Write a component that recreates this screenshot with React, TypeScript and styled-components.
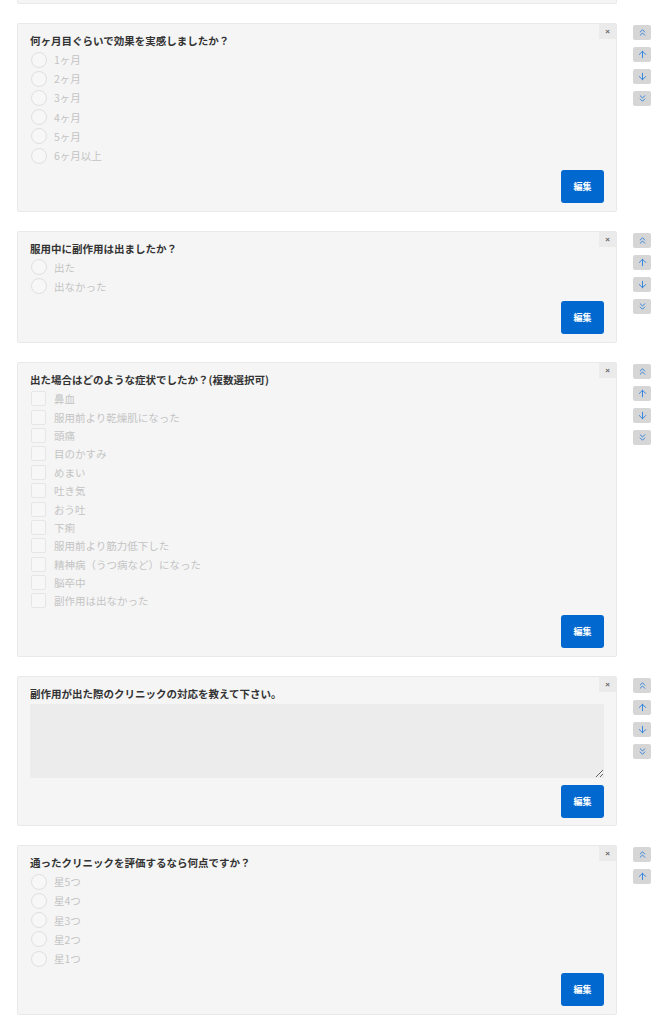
import styled, { createGlobalStyle } from "styled-components";
import { ChevronsUp, ChevronsDown, ArrowUp, ArrowDown } from "lucide-react";

const GlobalStyle = createGlobalStyle`
  body {
    margin: 0;
    background: #ffffff;
    font-family: "Noto Sans CJK JP", "Noto Sans", "Liberation Sans", sans-serif;
  }
`

const Page = styled.div`
  display: flex;
  flex-direction: column;
  gap: 19px;
  padding-left: 17px;
  padding-bottom: 20px;
`

const Row = styled.div`
  display: flex;
  align-items: flex-start;
  gap: 16px;
`

const PrevTail = styled.div`
  width: 600px;
  height: 4px;
  box-sizing: border-box;
  background: #f5f5f5;
  border: 1px solid #e9e9e9;
  border-top: none;
  border-radius: 0 0 2px 2px;
`

const Card = styled.div`
  position: relative;
  width: 600px;
  box-sizing: border-box;
  background: #f5f5f5;
  border: 1px solid #e9e9e9;
  border-radius: 2px;
  padding: 10px 12px 7.5px 12px;
  display: flex;
  flex-direction: column;
`

const CloseButton = styled.button`
  position: absolute;
  top: 0;
  right: 0;
  width: 17px;
  height: 15px;
  border: none;
  padding: 0;
  background: #ebebeb;
  color: #666;
  font-size: 8px;
  line-height: 15px;
  font-family: "Liberation Sans", sans-serif;
  font-weight: bold;
`

const Title = styled.div`
  font-size: 10.5px;
  line-height: 14px;
  font-weight: 700;
  color: #333;
`

const OptionList = styled.div<{ $rowHeight: number }>`
  display: flex;
  flex-direction: column;
  margin-top: ${(p) => (p.$rowHeight > 19 ? 2 : 3)}px;

  & > * {
    height: ${(p) => p.$rowHeight}px;
  }
`

const Option = styled.label`
  display: flex;
  align-items: center;
  gap: 7px;
  padding-left: 1px;
  font-size: 10.5px;
  color: #c4c4c4;
`

const Radio = styled.span`
  width: 14px;
  height: 14px;
  border-radius: 50%;
  border: 1px solid #e0e0e0;
  background: #f7f7f7;
  flex-shrink: 0;
`

const Check = styled.span`
  width: 13px;
  height: 13px;
  border-radius: 2px;
  border: 1px solid #e6e6e6;
  background: #f7f7f7;
  flex-shrink: 0;
  margin-right: 1px;
`

const TextArea = styled.textarea`
  margin-top: 3px;
  height: 74px;
  box-sizing: border-box;
  width: 100%;
  border: none;
  background: #ececec;
  resize: vertical;
  outline: none;
`

const Footer = styled.div<{ $gap: number }>`
  display: flex;
  justify-content: flex-end;
  margin-top: ${(p) => p.$gap}px;
`

const EditButton = styled.button`
  width: 43px;
  height: 33px;
  border: none;
  border-radius: 3px;
  background: #0068cf;
  color: #fff;
  font-size: 9px;
  font-weight: 700;
  font-family: inherit;
  padding: 0;
`

const SideControls = styled.div`
  display: flex;
  flex-direction: column;
  gap: 7px;
  margin-top: 2px;
`

const MoveButton = styled.button`
  width: 18px;
  height: 15px;
  border: none;
  border-radius: 2px;
  background: #d6d6d6;
  color: #2a7fde;
  display: flex;
  align-items: center;
  justify-content: center;
  padding: 0;
`

type Question = {
  title: string
  kind: "radio" | "check" | "text"
  options?: string[]
  last?: boolean
}

const questions: Question[] = [
  {
    title: "何ヶ月目ぐらいで効果を実感しましたか？",
    kind: "radio",
    options: ["1ヶ月", "2ヶ月", "3ヶ月", "4ヶ月", "5ヶ月", "6ヶ月以上"],
  },
  {
    title: "服用中に副作用は出ましたか？",
    kind: "radio",
    options: ["出た", "出なかった"],
  },
  {
    title: "出た場合はどのような症状でしたか？(複数選択可)",
    kind: "check",
    options: [
      "鼻血",
      "服用前より乾燥肌になった",
      "頭痛",
      "目のかすみ",
      "めまい",
      "吐き気",
      "おう吐",
      "下痢",
      "服用前より筋力低下した",
      "精神病（うつ病など）になった",
      "脳卒中",
      "副作用は出なかった",
    ],
  },
  {
    title: "副作用が出た際のクリニックの対応を教えて下さい。",
    kind: "text",
  },
  {
    title: "通ったクリニックを評価するなら何点ですか？",
    kind: "radio",
    options: ["星5つ", "星4つ", "星3つ", "星2つ", "星1つ"],
    last: true,
  },
]

function QuestionCard({ q }: { q: Question }) {
  return (
    <Card>
      <CloseButton>×</CloseButton>
      <Title>{q.title}</Title>
      {q.kind === "text" ? (
        <TextArea />
      ) : (
        <OptionList $rowHeight={q.kind === "radio" ? 19.2 : 18.4}>
          {q.options!.map((o) => (
            <Option key={o}>
              {q.kind === "radio" ? <Radio /> : <Check />}
              {o}
            </Option>
          ))}
        </OptionList>
      )}
      <Footer $gap={q.kind === "text" ? 7 : 5}>
        <EditButton>編集</EditButton>
      </Footer>
    </Card>
  )
}

export default function App() {
  return (
    <>
      <GlobalStyle />
      <Page>
        <PrevTail />
        {questions.map((q) => (
          <Row key={q.title}>
            <QuestionCard q={q} />
            <SideControls>
              <MoveButton><ChevronsUp size={11} strokeWidth={2} /></MoveButton>
              <MoveButton><ArrowUp size={11} strokeWidth={2} /></MoveButton>
              {!q.last && (
                <>
                  <MoveButton><ArrowDown size={11} strokeWidth={2} /></MoveButton>
                  <MoveButton><ChevronsDown size={11} strokeWidth={2} /></MoveButton>
                </>
              )}
            </SideControls>
          </Row>
        ))}
      </Page>
    </>
  )
}
